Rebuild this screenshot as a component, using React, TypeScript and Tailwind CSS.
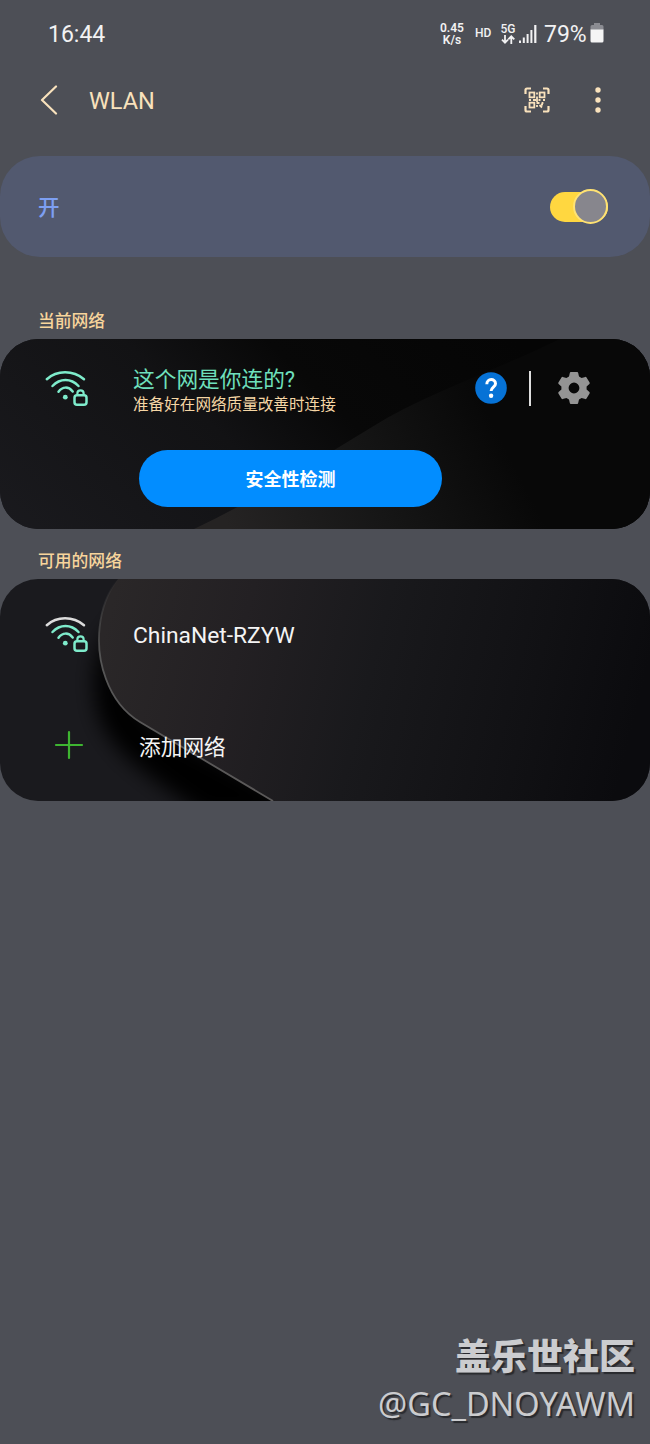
import React from 'react';

const WifiLockIcon = ({ topColor = '#7eebcb' }: { topColor?: string }) => (
  <svg className="h-[42px] w-[46px] shrink-0" viewBox="0 0 46 42" fill="none" stroke="#7eebcb" strokeWidth="2.500" strokeLinecap="round">
    <path d="M2.800 12.200C13 3 29 3 40 12.200" stroke={topColor} />
    <path d="M8.500 19C16 11 27 11 34.500 19" />
    <path d="M14.500 24.700C18.500 19.300 24.500 19.300 28.700 24.500" />
    <circle cx="21.300" cy="30.200" r="2.400" fill="#7eebcb" stroke="none" />
    <rect x="30.500" y="28.200" width="12" height="9.600" rx="2.500" />
    <path d="M33.400 28V26C33.400 22.400 39.600 22.400 39.600 26V28" strokeWidth="2.200" />
  </svg>
);

const QrScanIcon = () => (
  <svg className="h-[26px] w-[26px]" viewBox="0 0 26 26" fill="none" stroke="#f9e2bc" strokeWidth="1.800">
    <path d="M1.500 7V3Q1.500 1.500 3 1.500H7M19 1.500H23Q24.500 1.500 24.500 3V7M24.500 19V23Q24.500 24.500 23 24.500H19M7 24.500H3Q1.500 24.500 1.500 23V19" strokeWidth="2.200" />
    <rect x="5.500" y="5.500" width="4.800" height="4.800" />
    <rect x="15.700" y="5.500" width="4.800" height="4.800" />
    <rect x="5.500" y="15.700" width="4.800" height="4.800" />
    <path d="M13 5.500V7.500M13 9.500V15M5 13H7M9 13H12M14.500 13H16.500M19 13H21M12.500 16H15.500M13 18V20M15.500 18L18 20.500M18.500 15V17M17 17.500H19" />
  </svg>
);

const GearIcon = () => (
  <svg className="h-[34px] w-[34px]" viewBox="0 0 34 34">
    <path
      fill="#949494"
      fillRule="evenodd"
      d="M13.800 1H20.200Q21 1 21.200 1.900L22 5.500L24.600 7L28.300 5.900Q29.100 5.700 29.500 6.400L32.600 11.600Q33 12.300 32.400 12.900L29.600 15.500V18.500L32.400 21.100Q33 21.700 32.600 22.400L29.500 27.600Q29.100 28.300 28.300 28.100L24.600 27L22 28.500L21.200 32.100Q21 33 20.200 33H13.800Q13 33 12.800 32.100L12 28.500L9.400 27L5.700 28.100Q4.900 28.300 4.500 27.600L1.400 22.400Q1 21.700 1.600 21.100L4.400 18.500V15.500L1.600 12.900Q1 12.300 1.400 11.600L4.500 6.400Q4.900 5.700 5.700 5.900L9.400 7L12 5.500L12.800 1.900Q13 1 13.800 1ZM17 11.600A5.400 5.400 0 1 0 17 22.400A5.400 5.400 0 1 0 17 11.600Z"
    />
  </svg>
);

const StatusBar = () => (
  <div className="flex h-[68px] items-center justify-between pl-[48px] pr-[46px] text-[#f2f2f3]">
    <span className="text-[23px] leading-none">16:44</span>
    <div className="flex items-center">
      <div className="w-[28px] text-center text-[12px] font-semibold leading-[12px]">
        <div className="h-[12px]">0.45</div>
        <div className="h-[12px]">K/s</div>
      </div>
      <span className="-mt-[3px] ml-[9px] w-[17px] text-[12px] font-medium leading-none">HD</span>
      <div className="ml-[8px] flex w-[16px] flex-col items-center">
        <span className="text-[12px] font-medium leading-[11px]">5G</span>
        <svg className="h-[9px] w-[14px]" viewBox="0 0 14 9" fill="none" stroke="#f2f2f3" strokeWidth="1.800">
          <path d="M4 0V7.500M1 4.700L4 7.700L7 4.700M10.300 9V1.500M7.300 4.300L10.300 1.300L13.300 4.300" />
        </svg>
      </div>
      <svg className="ml-[3px] h-[18px] w-[18px]" viewBox="0 0 18 18" fill="#f2f2f3">
        <path d="M0 15.500H2V18H0ZM3.800 12.500H5.800V18H3.800ZM7.600 9H9.600V18H7.600ZM11.400 5H13.400V18H11.400ZM15.200 0H17.400V18H15.200Z" />
      </svg>
      <span className="ml-[7px] w-[44px] text-[23px] leading-none">79%</span>
      <svg className="-mt-[2px] ml-[2px] h-[20px] w-[14px]" viewBox="0 0 14 20">
        <path d="M4 0H10V2H12Q13.500 2 13.500 3.500V7H0.500V3.500Q0.500 2 2 2H4Z" fill="#8b8c92" />
        <path d="M0.500 6.500H13.500V18Q13.500 19.500 12 19.500H2Q0.500 19.500 0.500 18Z" fill="#f5f5f5" />
      </svg>
    </div>
  </div>
);

const Header = () => (
  <header className="flex h-[64px] items-center pl-[40px] pr-[46px]">
    <svg className="h-[30px] w-[18px]" viewBox="0 0 18 30" fill="none" stroke="#f9e2bc" strokeWidth="2.200" strokeLinecap="round" strokeLinejoin="round">
      <path d="M16 1.500L2 15L16 28.500" />
    </svg>
    <h1 className="ml-[31px] mt-[3px] text-[23.500px] leading-none text-[#f9e2bc]">WLAN</h1>
    <div className="ml-auto flex items-center gap-[42px]">
      <QrScanIcon />
      <svg className="h-[26px] w-[12px]" viewBox="0 0 12 26" fill="#f9e2bc">
        <circle cx="6" cy="3" r="2.700" />
        <circle cx="6" cy="13" r="2.700" />
        <circle cx="6" cy="23" r="2.700" />
      </svg>
    </div>
  </header>
);

const CurrentNetwork = () => (
  <section className="relative h-[190px] overflow-hidden rounded-[38px] bg-[#151519]">
    <svg className="absolute inset-0 h-full w-full" viewBox="0 0 650 190">
      <defs>
        <linearGradient id="currentBase" x1="0" y1="1" x2="1" y2="0.700">
          <stop offset="0" stopColor="#1a1a1e" />
          <stop offset="0.450" stopColor="#121214" />
          <stop offset="0.650" stopColor="#080808" />
          <stop offset="1" stopColor="#050505" />
        </linearGradient>
        <linearGradient id="currentSheen" gradientUnits="userSpaceOnUse" x1="230" y1="190" x2="480" y2="60">
          <stop offset="0" stopColor="#252323" />
          <stop offset="0.500" stopColor="#161616" />
          <stop offset="1" stopColor="#080808" />
        </linearGradient>
      </defs>
      <rect width="650" height="190" fill="url(#currentBase)" />
      <path d="M194 190C260 159 320 119 372 88C425 55 485 36 560 0H650V190Z" fill="url(#currentSheen)" />
    </svg>
    <div className="relative flex h-[98px] items-center pl-[44px] pr-[59px]">
      <WifiLockIcon />
      <div className="ml-[43px] mt-[6px]">
        <div className="text-[21.700px] leading-[27px] text-[#6fe0bd]">这个网是你连的?</div>
        <div className="text-[15.600px] leading-[24px] text-[#f5d6a5]">准备好在网络质量改善时连接</div>
      </div>
      <div className="ml-auto flex items-center">
        <svg className="h-[32px] w-[32px]" viewBox="0 0 32 32">
          <circle cx="16" cy="16" r="15.800" fill="#0672d6" />
          <path d="M11.800 12.200C11.800 6 20.500 6.300 20.500 11.700C20.500 15 16.100 15.300 16.100 19" fill="none" stroke="#fff" strokeWidth="3" />
          <circle cx="16.100" cy="23.800" r="2.200" fill="#fff" />
        </svg>
        <div className="ml-[22px] mr-[26px] h-[35px] w-[2px] bg-[#dedede]" />
        <GearIcon />
      </div>
    </div>
    <button className="relative ml-[139px] mt-[13px] flex h-[57px] w-[303px] items-center justify-center rounded-full bg-[#028dff] pt-[2px] text-[18px] font-bold text-white">
      安全性检测
    </button>
  </section>
);

const AvailableNetworks = () => (
  <section className="relative h-[222px] overflow-hidden rounded-[38px] bg-[#1a1a1e]">
    <svg className="absolute inset-0 h-full w-full" viewBox="0 0 650 222">
      <defs>
        <linearGradient id="slab" gradientUnits="userSpaceOnUse" x1="110" y1="30" x2="630" y2="160">
          <stop offset="0" stopColor="#2a2728" />
          <stop offset="0.250" stopColor="#232023" />
          <stop offset="0.500" stopColor="#19191c" />
          <stop offset="0.800" stopColor="#111114" />
          <stop offset="1" stopColor="#0b0b0e" />
        </linearGradient>
        <linearGradient id="slabEdge" gradientUnits="userSpaceOnUse" x1="0" y1="0" x2="0" y2="222">
          <stop offset="0" stopColor="#555" stopOpacity="0" />
          <stop offset="0.350" stopColor="#555" />
          <stop offset="1" stopColor="#5b5959" />
        </linearGradient>
        <filter id="shadowBlur" x="-30%" y="-30%" width="160%" height="160%">
          <feGaussianBlur stdDeviation="10" />
        </filter>
      </defs>
      <path d="M114 55C100 74 96 105 105 137C118 172 155 194 208 232H300L145 148L110 90Z" fill="#020406" stroke="#020406" strokeWidth="12" filter="url(#shadowBlur)" />
      <path d="M118 0C97 27 94 68 106 100C113 119 125 134 140 143L273 222H650V0Z" fill="url(#slab)" />
      <path d="M118 0C97 27 94 68 106 100C113 119 125 134 140 143L273 222" fill="none" stroke="url(#slabEdge)" strokeWidth="1.800" />
    </svg>
    <div className="relative flex h-[110px] items-center pl-[44px]">
      <WifiLockIcon topColor="#dcdcdc" />
      <span className="ml-[43px] mt-[5px] text-[22.800px] leading-none text-[#f4f4f4]">ChinaNet-RZYW</span>
    </div>
    <div className="relative flex h-[112px] items-center pl-[54px]">
      <svg className="h-[30px] w-[30px]" viewBox="0 0 30 30" stroke="#3eb531" strokeWidth="2.200" strokeLinecap="round">
        <path d="M15 2V28M2 15H28" />
      </svg>
      <span className="ml-[55px] mt-[5px] text-[21.700px] leading-none text-[#f4f4f4]">添加网络</span>
    </div>
  </section>
);

const App = () => {
  return (
    <main className="flex h-[1444px] w-[650px] flex-col bg-[#4d4f56] font-[Roboto,'Noto_Sans_CJK_SC',sans-serif]">
      <StatusBar />
      <Header />
      <section className="mt-[24px] flex h-[101px] shrink-0 items-center justify-between rounded-[40px] bg-[#52596f] pl-[38px] pr-[42px]">
        <span className="mt-[4px] text-[21.500px] font-medium text-[#7d9ff2]">开</span>
        <div className="flex h-[30px] w-[58px] items-center justify-end rounded-full bg-[#ffd740]">
          <div className="h-[35px] w-[35px] shrink-0 rounded-full border-2 border-[#ffe273] bg-[#87868d]" />
        </div>
      </section>
      <h2 className="mt-[46px] h-[36px] pl-[38px] text-[16.800px] font-medium leading-[36px] text-[#f8d59c]">当前网络</h2>
      <CurrentNetwork />
      <h2 className="mt-[14px] h-[36px] pl-[38px] text-[16.800px] font-medium leading-[36px] text-[#f8d59c]">可用的网络</h2>
      <AvailableNetworks />
      <footer className="mt-auto flex flex-col items-end pb-[18px] pr-[15px] text-[#cbcccf] [text-shadow:2px_2px_1px_#292a2e]">
        <div className="text-[36px] font-black leading-[45px]">盖乐世社区</div>
        <div className="font-['Noto_Sans',sans-serif] text-[32.500px] leading-[45px]">@GC_DNOYAWM</div>
      </footer>
    </main>
  );
};

export default App;
